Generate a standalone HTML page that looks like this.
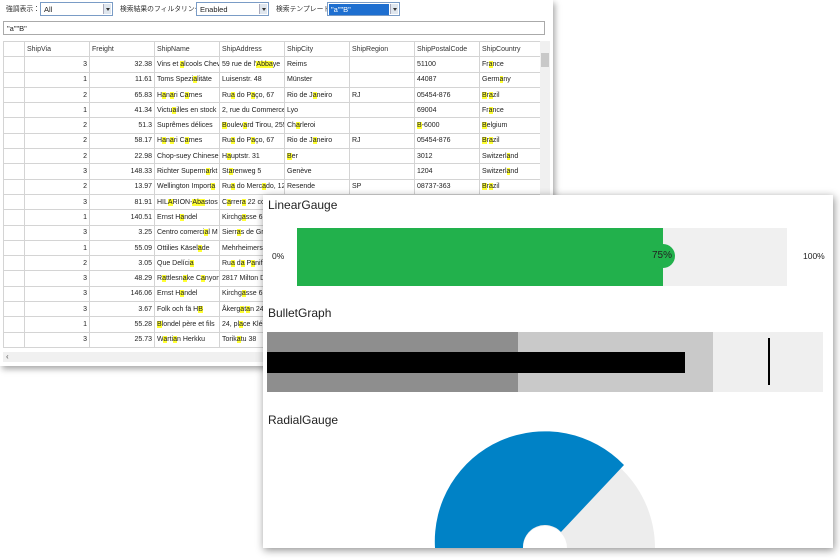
<!DOCTYPE html>
<html><head><meta charset="utf-8"><style>
*{margin:0;padding:0;box-sizing:border-box}
body{width:840px;height:560px;background:#fff;position:relative;overflow:hidden;font-family:"Segoe UI","Liberation Sans","Noto Sans CJK JP",sans-serif;font-size:8px;color:#222}
#win{position:absolute;left:0;top:0;width:553px;height:366px;background:#fff;box-shadow:2px 3px 6px rgba(0,0,0,.35)}
.lbl{position:absolute;top:3px;font-size:6.8px;color:#333;white-space:nowrap}
.cb{position:absolute;top:2px;height:14px;border:1px solid #7a9cc6;background:#fff;font-size:7.5px;padding:2px 3px}
.cb i{position:absolute;right:1px;top:1px;width:8px;height:10px;background:#dfe6ee;border-left:1px solid #aab}
.cb i:after{content:"";position:absolute;left:2px;top:4px;border:2px solid transparent;border-top:3px solid #333}
#tb{position:absolute;left:3px;top:21px;width:542px;height:14px;border:1px solid #aaa;font-size:7.5px;padding:2px 3px}
table{position:absolute;left:3px;top:41px;width:537px;border-collapse:collapse;table-layout:fixed;font-size:7px}
td{border:1px solid #d4d4d4;height:15.3px;padding:0 2px;white-space:nowrap;overflow:hidden}
tr:first-child td{color:#333}
td.n{text-align:right}
b{font-weight:normal;background:#ffff33}
#vs{position:absolute;left:540px;top:41px;width:10px;height:310px;background:#f0f0f0}
#hs{position:absolute;left:3px;top:352px;width:537px;height:10px;background:#f0f0f0;font-size:8px;color:#555;padding-left:3px;line-height:10px}
#panel{position:absolute;left:263px;top:195px;width:570px;height:353px;background:#fff;box-shadow:1px 2px 8px rgba(0,0,0,.45)}
.t{position:absolute;left:5px;font-size:12px;color:#222}
</style></head><body>
<div id="win">
<span class="lbl" style="left:6px">強調表示：</span>
<div class="cb" style="left:40px;width:73px">All<i></i></div>
<span class="lbl" style="left:120px">検索結果のフィルタリング：</span>
<div class="cb" style="left:196px;width:73px">Enabled<i></i></div>
<span class="lbl" style="left:276px">検索テンプレート：</span>
<div class="cb" style="left:327px;width:73px;padding:1px"><span style="background:#1e6fd0;color:#fff;display:block;width:60px;padding:1px 2px">"a""B"</span><i></i></div>
<div id="tb">"a""B"</div>
<table>
<colgroup><col style="width:21px"><col style="width:65px"><col style="width:65px"><col style="width:65px"><col style="width:65px"><col style="width:65px"><col style="width:65px"><col style="width:65px"><col style="width:61px"></colgroup>
<tr><td></td><td>ShipVia</td><td>Freight</td><td>ShipName</td><td>ShipAddress</td><td>ShipCity</td><td>ShipRegion</td><td>ShipPostalCode</td><td>ShipCountry</td></tr>
<tr><td></td><td class="n">3</td><td class="n">32.38</td><td>Vins et <b>a</b>lcools Chev</td><td>59 rue de l'<b>Abba</b>ye</td><td>Reims</td><td></td><td>51100</td><td>Fr<b>a</b>nce</td></tr>
<tr><td></td><td class="n">1</td><td class="n">11.61</td><td>Toms Spezi<b>a</b>litäte</td><td>Luisenstr. 48</td><td>Münster</td><td></td><td>44087</td><td>Germ<b>a</b>ny</td></tr>
<tr><td></td><td class="n">2</td><td class="n">65.83</td><td>H<b>a</b>n<b>a</b>ri C<b>a</b>rnes</td><td>Ru<b>a</b> do P<b>a</b>ço, 67</td><td>Rio de J<b>a</b>neiro</td><td>RJ</td><td>05454-876</td><td><b>B</b>r<b>a</b>zil</td></tr>
<tr><td></td><td class="n">1</td><td class="n">41.34</td><td>Victu<b>a</b>illes en stock</td><td>2, rue du Commerce</td><td>Lyo</td><td></td><td>69004</td><td>Fr<b>a</b>nce</td></tr>
<tr><td></td><td class="n">2</td><td class="n">51.3</td><td>Suprêmes délices</td><td><b>B</b>oulev<b>a</b>rd Tirou, 255</td><td>Ch<b>a</b>rleroi</td><td></td><td><b>B</b>-6000</td><td><b>B</b>elgium</td></tr>
<tr><td></td><td class="n">2</td><td class="n">58.17</td><td>H<b>a</b>n<b>a</b>ri C<b>a</b>rnes</td><td>Ru<b>a</b> do P<b>a</b>ço, 67</td><td>Rio de J<b>a</b>neiro</td><td>RJ</td><td>05454-876</td><td><b>B</b>r<b>a</b>zil</td></tr>
<tr><td></td><td class="n">2</td><td class="n">22.98</td><td>Chop-suey Chinese</td><td>H<b>a</b>uptstr. 31</td><td><b>B</b>er</td><td></td><td>3012</td><td>Switzerl<b>a</b>nd</td></tr>
<tr><td></td><td class="n">3</td><td class="n">148.33</td><td>Richter Superm<b>a</b>rkt</td><td>St<b>a</b>renweg 5</td><td>Genève</td><td></td><td>1204</td><td>Switzerl<b>a</b>nd</td></tr>
<tr><td></td><td class="n">2</td><td class="n">13.97</td><td>Wellington Import<b>a</b></td><td>Ru<b>a</b> do Merc<b>a</b>do, 12</td><td>Resende</td><td>SP</td><td>08737-363</td><td><b>B</b>r<b>a</b>zil</td></tr>
<tr><td></td><td class="n">3</td><td class="n">81.91</td><td>HIL<b>A</b>RION-<b>Aba</b>stos</td><td>C<b>a</b>rrer<b>a</b> 22 co</td><td></td><td></td><td></td><td></td></tr>
<tr><td></td><td class="n">1</td><td class="n">140.51</td><td>Ernst H<b>a</b>ndel</td><td>Kirchg<b>a</b>sse 6</td><td></td><td></td><td></td><td></td></tr>
<tr><td></td><td class="n">3</td><td class="n">3.25</td><td>Centro comerci<b>a</b>l M</td><td>Sierr<b>a</b>s de Gr<b>a</b></td><td></td><td></td><td></td><td></td></tr>
<tr><td></td><td class="n">1</td><td class="n">55.09</td><td>Ottilies Käsel<b>a</b>de</td><td>Mehrheimers</td><td></td><td></td><td></td><td></td></tr>
<tr><td></td><td class="n">2</td><td class="n">3.05</td><td>Que Delíci<b>a</b></td><td>Ru<b>a</b> d<b>a</b> P<b>a</b>nifi</td><td></td><td></td><td></td><td></td></tr>
<tr><td></td><td class="n">3</td><td class="n">48.29</td><td>R<b>a</b>ttlesn<b>a</b>ke C<b>a</b>nyon</td><td>2817 Milton D</td><td></td><td></td><td></td><td></td></tr>
<tr><td></td><td class="n">3</td><td class="n">146.06</td><td>Ernst H<b>a</b>ndel</td><td>Kirchg<b>a</b>sse 6</td><td></td><td></td><td></td><td></td></tr>
<tr><td></td><td class="n">3</td><td class="n">3.67</td><td>Folk och fä H<b>B</b></td><td>Åkerg<b>a</b>t<b>a</b>n 24</td><td></td><td></td><td></td><td></td></tr>
<tr><td></td><td class="n">1</td><td class="n">55.28</td><td><b>B</b>londel père et fils</td><td>24, pl<b>a</b>ce Kléber</td><td></td><td></td><td></td><td></td></tr>
<tr><td></td><td class="n">3</td><td class="n">25.73</td><td>W<b>a</b>rti<b>a</b>n Herkku</td><td>Torik<b>a</b>tu 38</td><td></td><td></td><td></td><td></td></tr>
</table>
<div id="vs"><div style="position:absolute;left:1px;top:12px;width:8px;height:14px;background:#c8c8c8"></div></div>
<div id="hs">‹</div>
</div>

<div id="panel">
<div class="t" style="top:3px">LinearGauge</div>
<div style="position:absolute;left:9px;top:56px;font-size:8.5px">0%</div>
<div style="position:absolute;left:540px;top:56px;font-size:8.5px">100%</div>
<div style="position:absolute;left:34px;top:33px;width:490px;height:58px;background:#f0f0f0"></div>
<div style="position:absolute;left:34px;top:33px;width:366px;height:58px;background:#22b14c"></div>
<div style="position:absolute;left:388px;top:49px;width:24px;height:24px;border-radius:50%;background:#22b14c"></div>
<div style="position:absolute;left:389px;top:55px;font-size:10px;color:#222">75%</div>
<div class="t" style="top:111px">BulletGraph</div>
<div style="position:absolute;left:4px;top:137px;width:556px;height:60px;background:#efefef"></div>
<div style="position:absolute;left:4px;top:137px;width:446px;height:60px;background:#c9c9c9"></div>
<div style="position:absolute;left:4px;top:137px;width:251px;height:60px;background:#8e8e8e"></div>
<div style="position:absolute;left:4px;top:157px;width:418px;height:21px;background:#000"></div>
<div style="position:absolute;left:505px;top:143px;width:2px;height:47px;background:#000"></div>
<div class="t" style="top:218px">RadialGauge</div>
<svg style="position:absolute;left:0;top:0" width="570" height="353">
<path d="M172 353 A110 110 0 0 1 392 353 L304 353 A22 22 0 0 0 260 353 Z" fill="#ededed"/>
<path d="M172 353 A110 110 0 0 1 361 270 L298 337 A22 22 0 0 0 260 353 Z" fill="#0082c6"/>
</svg>
</div>
</body></html>
